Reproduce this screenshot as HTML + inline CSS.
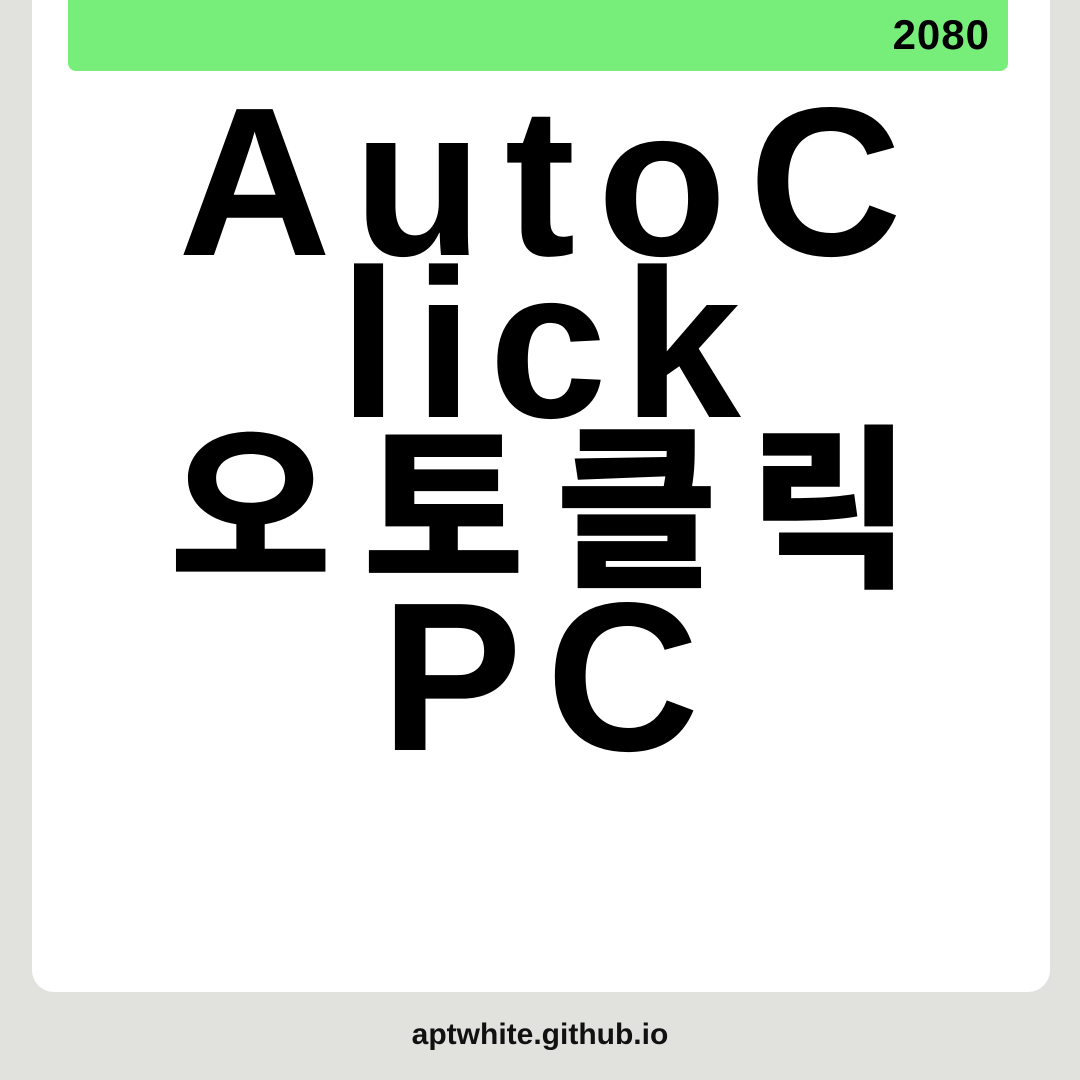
<!DOCTYPE html>
<html><head><meta charset="utf-8"><style>
html,body{margin:0;padding:0;}
body{width:1080px;height:1080px;background:#e1e1dd;position:relative;overflow:hidden;font-family:"Liberation Sans","Noto Sans CJK KR",sans-serif;}
.card{position:absolute;left:32px;top:-20px;width:1018px;height:1012px;background:#fff;border-radius:22px;}
.bar{position:absolute;left:68px;top:-10px;width:940px;height:81px;background:#77ed7a;border-radius:8px;}
.num{position:absolute;right:90px;top:11px;font-weight:bold;font-size:42px;color:#000;letter-spacing:1px;}
.l{position:absolute;left:0;width:1080px;text-align:center;font-weight:bold;color:#000;white-space:nowrap;line-height:1;}
.foot{position:absolute;left:0;width:1080px;top:1018px;text-align:center;font-weight:bold;font-size:30px;color:#111;}
</style></head><body>
<div class="card"></div>
<div class="bar"></div>
<div class="num">2080</div>
<div class="l" style="top:76px;font-size:212px;letter-spacing:22px;text-indent:22px;">AutoC</div>
<div class="l" style="top:238px;font-size:212px;letter-spacing:16px;text-indent:16px;">lick</div>
<div class="l" style="top:400px;font-size:176px;letter-spacing:31px;text-indent:31px;font-family:'Noto Sans CJK KR',sans-serif;font-weight:900;line-height:1.1;">오토클릭</div>
<div class="l" style="top:571px;font-size:212px;letter-spacing:24px;text-indent:24px;">PC</div>
<div class="foot">aptwhite.github.io</div>
</body></html>
